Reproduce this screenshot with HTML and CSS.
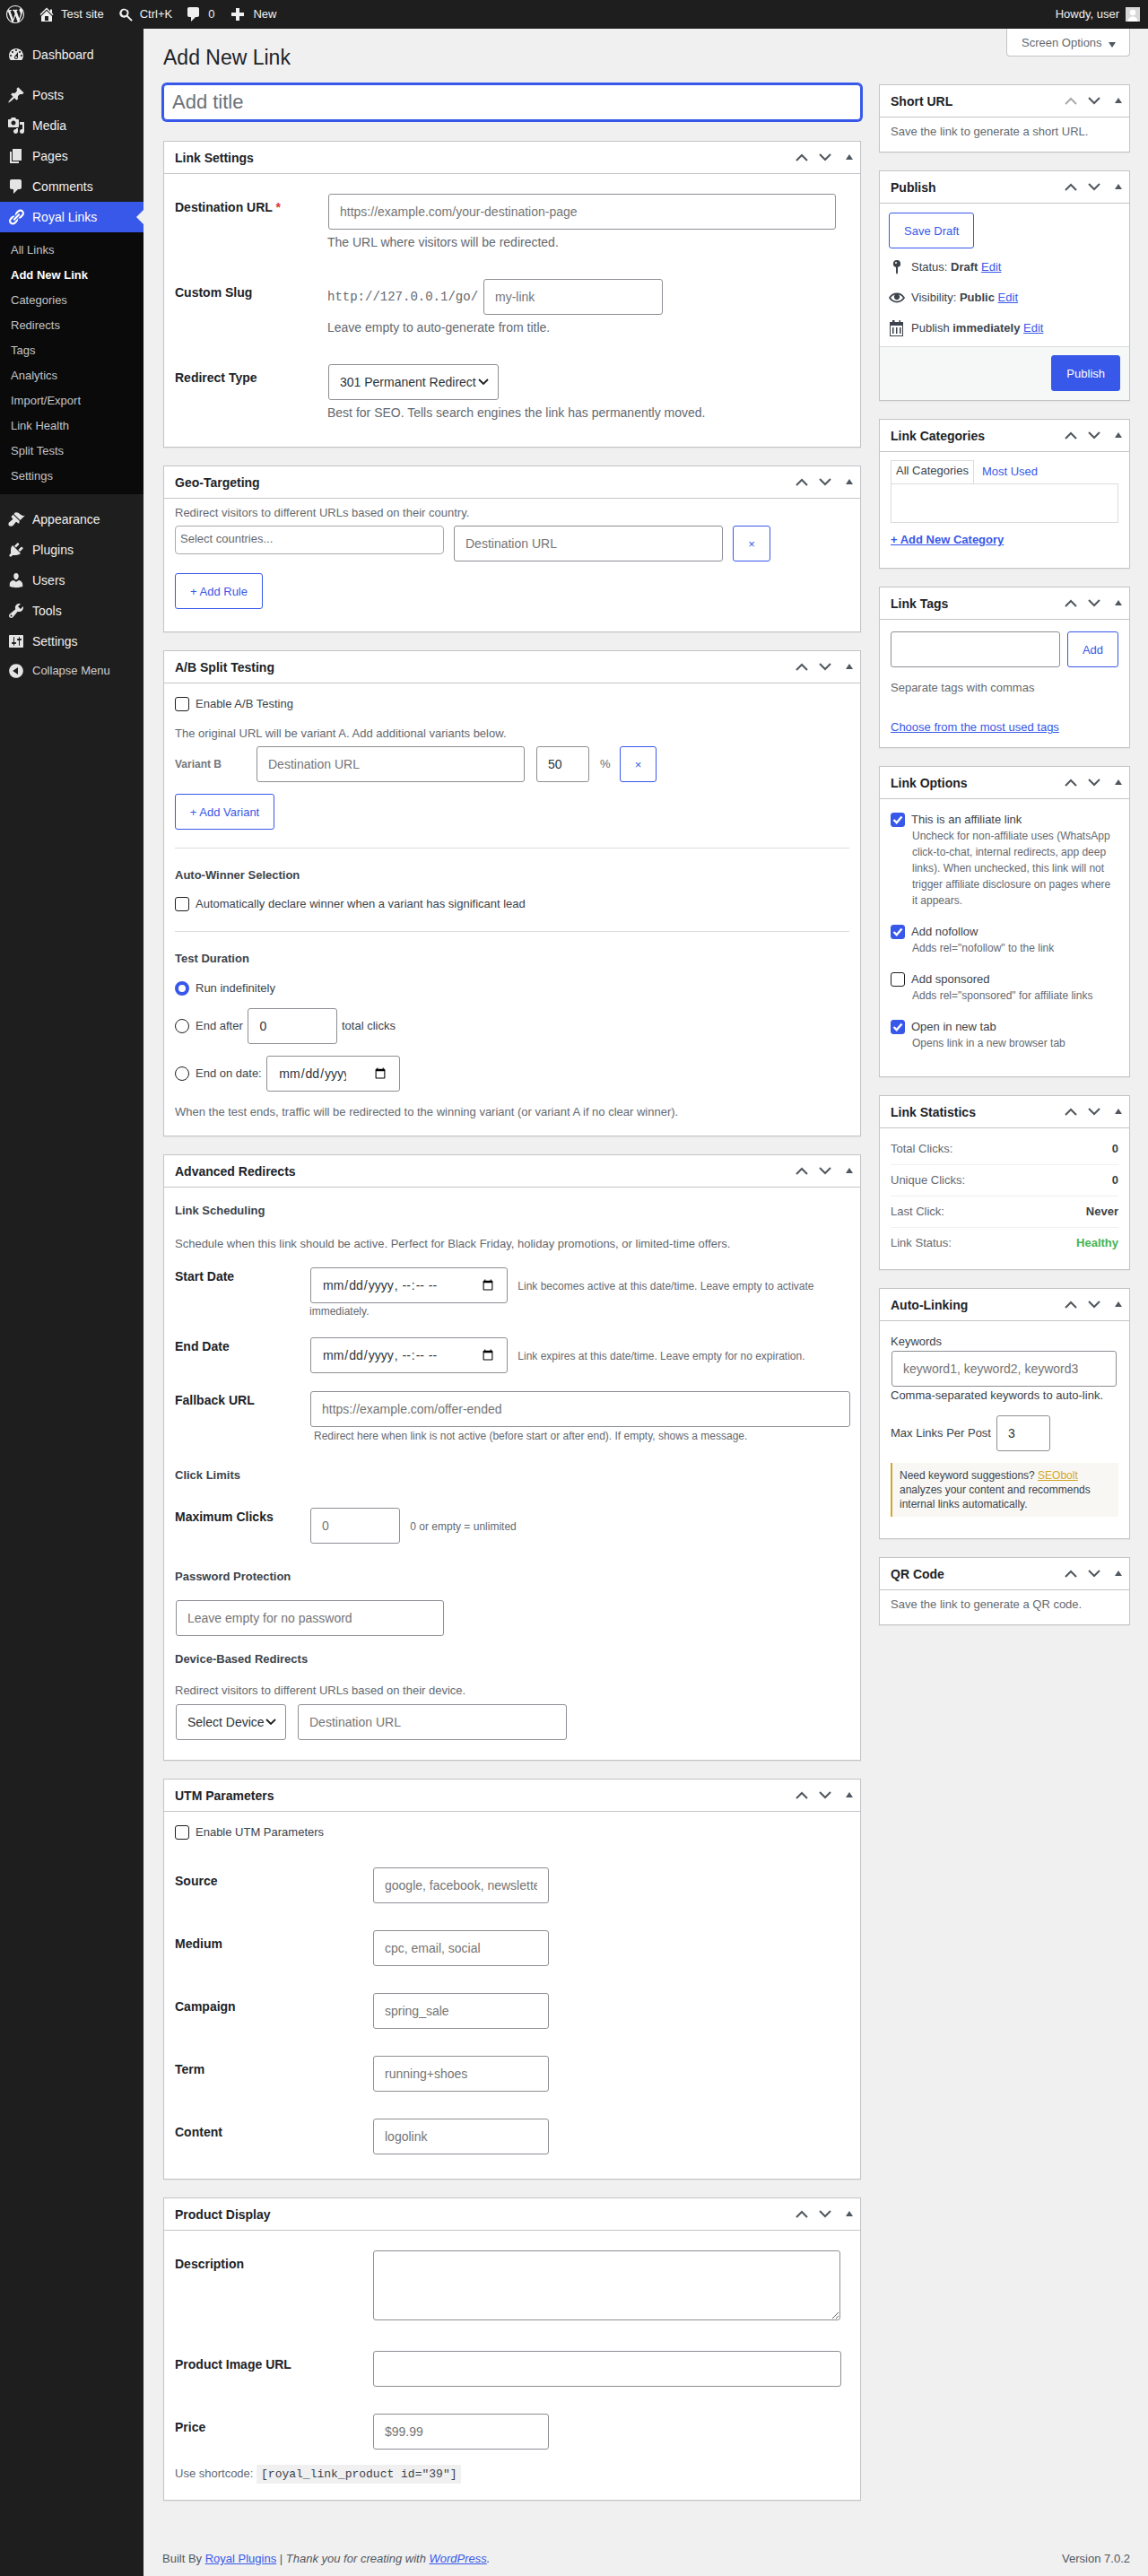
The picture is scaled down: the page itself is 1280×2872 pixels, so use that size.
FILE: index.html
```html
<!DOCTYPE html>
<html lang="en">
<head>
    <meta charset="UTF-8">
    <meta name="viewport" content="width=device-width, initial-scale=1.0">
    <title>Add New Link</title>
    <link rel="stylesheet" href="styles.css">
</head>
<body>
    <svg class="sprite" width="0" height="0" aria-hidden="true">
        <symbol id="i-wp" viewBox="0 0 20 20"><path d="M20 10c0-5.51-4.49-10-10-10C4.48 0 0 4.49 0 10c0 5.52 4.48 10 10 10 5.51 0 10-4.48 10-10zM7.78 15.37L4.37 6.22c.55-.02 1.17-.08 1.17-.08.5-.06.44-1.13-.06-1.11 0 0-1.45.11-2.37.11-.18 0-.37 0-.58-.01C4.12 2.69 6.87 1.11 10 1.11c2.33 0 4.45.87 6.05 2.34-.68-.11-1.65.39-1.65 1.58 0 .74.45 1.36.9 2.1.35.61.55 1.36.55 2.46 0 1.49-1.4 5-1.4 5l-3.03-8.37c.54-.02.82-.17.82-.17.5-.05.44-1.25-.06-1.22 0 0-1.44.12-2.38.12-.87 0-2.33-.12-2.33-.12-.5-.03-.56 1.2-.06 1.22l.92.08 1.26 3.41zM17.41 10c.24-.64.74-1.87.43-4.25.7 1.29 1.05 2.71 1.05 4.25 0 3.29-1.73 6.24-4.4 7.78.97-2.59 1.94-5.2 2.92-7.78zM6.1 18.09C3.12 16.65 1.11 13.53 1.11 10c0-1.3.23-2.48.72-3.59C3.25 10.3 4.67 14.2 6.1 18.09zm4.03-6.63l2.58 6.98c-.86.29-1.76.45-2.71.45-.79 0-1.57-.11-2.29-.33.81-2.38 1.62-4.74 2.42-7.1z"/></symbol>
        <symbol id="i-home" viewBox="0 0 20 20"><path d="M16 8.5l1.53 1.53-1.06 1.06L10 4.62l-6.47 6.47-1.06-1.06L10 2.5l4 4v-2h2v4zm-6-2.46l6 5.99V18H4v-5.97zM12 17v-5H8v5h4z"/></symbol>
        <symbol id="i-search" viewBox="0 0 20 20"><path d="M12.14 4.78c1.78 1.78 1.93 4.55.45 6.5l5.16 5.15-1.41 1.41-5.15-5.15c-1.96 1.48-4.73 1.33-6.51-.45-1.95-1.95-1.95-5.12 0-7.07 1.95-1.96 5.12-1.96 7.07 0zM10.73 10.44c1.17-1.17 1.17-3.07 0-4.24-1.17-1.18-3.07-1.18-4.24 0-1.18 1.17-1.18 3.07 0 4.24 1.17 1.18 3.07 1.18 4.24 0z"/></symbol>
        <symbol id="i-comment" viewBox="0 0 20 20"><path d="M5 2h9c1.1 0 2 .9 2 2v7c0 1.1-.9 2-2 2h-2l-5 5v-5H5c-1.1 0-2-.9-2-2V4c0-1.1.9-2 2-2z"/></symbol>
        <symbol id="i-plus" viewBox="0 0 20 20"><path d="M17 8v4h-5v5H8v-5H3V8h5V3h4v5h5z"/></symbol>
        <symbol id="i-dash" viewBox="0 0 20 20"><path d="M3.76 16h12.48c1.1-1.37 1.76-3.11 1.76-5 0-4.42-3.58-8-8-8s-8 3.58-8 8c0 1.89.66 3.63 1.76 5zM10 4c.55 0 1 .45 1 1s-.45 1-1 1-1-.45-1-1 .45-1 1-1zM6 6c.55 0 1 .45 1 1s-.45 1-1 1-1-.45-1-1 .45-1 1-1zm8 0c.55 0 1 .45 1 1s-.45 1-1 1-1-.45-1-1 .45-1 1-1zm-5.37 5.55L12 7v6c0 1.1-.9 2-2 2s-2-.9-2-2c0-.57.24-1.08.63-1.45zM4 10c.55 0 1 .45 1 1s-.45 1-1 1-1-.45-1-1 .45-1 1-1zm12 0c.55 0 1 .45 1 1s-.45 1-1 1-1-.45-1-1 .45-1 1-1zm-5 3c0-.55-.45-1-1-1s-1 .45-1 1 .45 1 1 1 1-.45 1-1z" fill-rule="evenodd"/></symbol>
        <symbol id="i-post" viewBox="0 0 20 20"><path d="M10.44 3.02l1.82-1.82 6.36 6.35-1.83 1.82c-1.05-.68-2.48-.57-3.41.36l-.75.75c-.92.93-1.04 2.35-.35 3.41l-1.83 1.82-2.41-2.41-2.8 2.79c-.42.42-3.38 2.71-3.8 2.29s1.86-3.39 2.28-3.81l2.79-2.79L4.1 9.36l1.83-1.82c1.05.69 2.48.57 3.4-.36l.75-.75c.93-.92 1.05-2.35.36-3.41z"/></symbol>
        <symbol id="i-media" viewBox="0 0 20 20"><path d="M13 11V4c0-.55-.45-1-1-1h-1.67L9 1H5L3.67 3H2c-.55 0-1 .45-1 1v7c0 .55.45 1 1 1h10c.55 0 1-.45 1-1zM7 4.5c1.38 0 2.5 1.12 2.5 2.5S8.38 9.5 7 9.5 4.5 8.38 4.5 7 5.62 4.5 7 4.5zM14 6h5v10.5c0 1.38-1.12 2.5-2.5 2.5S14 17.88 14 16.5s1.12-2.5 2.5-2.5c.17 0 .34.02.5.05V9h-3V6zm-4 8.05V13h2v3.5c0 1.38-1.12 2.5-2.5 2.5S7 17.88 7 16.5 8.12 14 9.5 14c.17 0 .34.02.5.05z" fill-rule="evenodd"/></symbol>
        <symbol id="i-page" viewBox="0 0 20 20"><path d="M6 15V2h10v13H6zm-1 1h8v2H3V5h2v11z"/></symbol>
        <symbol id="i-link" viewBox="0 0 20 20"><path d="M17.74 2.76c1.68 1.69 1.68 4.41 0 6.1l-1.53 1.52c-1.12 1.12-2.7 1.47-4.14 1.09l2.62-2.61.76-.77.76-.76c.84-.84.84-2.2 0-3.04-.84-.85-2.2-.85-3.04 0l-.77.76-3.38 3.38c-.37-1.44-.02-3.02 1.1-4.14l1.52-1.53c1.69-1.68 4.42-1.68 6.1 0zM8.59 13.43l5.34-5.34c.42-.42.42-1.1 0-1.52-.44-.43-1.13-.39-1.53 0l-5.33 5.34c-.42.42-.42 1.1 0 1.52.44.43 1.13.39 1.52 0zm-.76 2.29l4.14-4.15c.38 1.44.03 3.02-1.09 4.14l-1.52 1.53c-1.69 1.68-4.41 1.68-6.1 0-1.68-1.68-1.68-4.42 0-6.1l1.53-1.52c1.12-1.12 2.7-1.47 4.14-1.1l-4.14 4.15c-.85.84-.85 2.2 0 3.05.84.84 2.2.84 3.04 0z"/></symbol>
        <symbol id="i-brush" viewBox="0 0 20 20"><path d="M14.48 11.06L7.41 3.99l1.5-1.5c.5-.56 2.3-.47 3.51.32 1.21.8 1.43 1.28 2.91 2.1 1.18.64 2.45 1.26 4.45.85zm-.71.71L6.7 4.7 4.93 6.47c-.39.39-.39 1.02 0 1.41l1.06 1.06c.39.39.39 1.03 0 1.42-.6.6-1.43 1.11-2.21 1.69-.35.26-.7.53-1.01.84C1.43 13.23.91 15.8 2 17s3.64.83 4.98-.55c.3-.3.57-.65.83-.99.57-.78 1.08-1.61 1.67-2.21.39-.39 1.03-.39 1.42 0l1.06 1.06c.39.39 1.02.39 1.41 0z"/></symbol>
        <symbol id="i-plug" viewBox="0 0 20 20"><path d="M13.11 4.36L9.87 7.6 8 5.73l3.24-3.24c.35-.34 1.05-.2 1.56.32.52.51.66 1.21.31 1.55zm-8 1.77l.91-1.12 9.01 9.01-1.19.84c-.71.71-2.63 1.16-3.82 1.16H6.14L4.9 17.26c-.59.59-1.54.59-2.12 0-.59-.58-.59-1.53 0-2.12l1.24-1.24v-3.88c0-1.13.4-3.19 1.09-3.89zm7.26 3.97l3.24-3.24c.34-.35 1.04-.21 1.55.31.52.51.66 1.21.31 1.55l-3.24 3.25z"/></symbol>
        <symbol id="i-user" viewBox="0 0 20 20"><path d="M10 9.25c-2.27 0-2.73-3.44-2.73-3.44C7 4.02 7.82 2 9.97 2c2.16 0 2.98 2.02 2.71 3.81 0 0-.41 3.44-2.68 3.44zm0 2.57L12.72 10c2.39 0 4.52 2.33 4.52 4.53v2.49s-3.65 1.13-7.24 1.13c-3.65 0-7.24-1.13-7.24-1.13v-2.49c0-2.25 1.94-4.48 4.47-4.48z"/></symbol>
        <symbol id="i-tool" viewBox="0 0 20 20"><path d="M16.68 9.77c-1.34 1.34-3.3 1.67-4.95.99l-5.41 6.52c-.99.99-2.59.99-3.58 0s-.99-2.59 0-3.57l6.52-5.42c-.68-1.65-.35-3.61.99-4.95 1.28-1.28 3.12-1.62 4.72-1.06l-2.89 2.89 2.82 2.82 2.86-2.87c.53 1.58.18 3.39-1.08 4.65zM3.81 16.21c.4.39 1.04.39 1.43 0 .4-.4.4-1.04 0-1.43-.39-.4-1.03-.4-1.43 0-.39.39-.39 1.03 0 1.43z"/></symbol>
        <symbol id="i-set" viewBox="0 0 20 20"><path d="M18 16V4c0-.55-.45-1-1-1H3c-.55 0-1 .45-1 1v12c0 .55.45 1 1 1h14c.55 0 1-.45 1-1zM8 11h1c.55 0 1 .45 1 1s-.45 1-1 1H8v1.5c0 .28-.22.5-.5.5s-.5-.22-.5-.5V13H6c-.55 0-1-.45-1-1s.45-1 1-1h1V5.5c0-.28.22-.5.5-.5s.5.22.5.5V11zm5-2h-1c-.55 0-1-.45-1-1s.45-1 1-1h1V5.5c0-.28.22-.5.5-.5s.5.22.5.5V7h1c.55 0 1 .45 1 1s-.45 1-1 1h-1v5.5c0 .28-.22.5-.5.5s-.5-.22-.5-.5V9z"/></symbol>
        <symbol id="i-collapse" viewBox="0 0 20 20"><path d="M10 2.16c4.33 0 7.84 3.51 7.84 7.84s-3.51 7.84-7.84 7.84S2.16 14.33 2.16 10 5.71 2.16 10 2.16zm2 11.72V6.12L6.18 9.97z"/></symbol>
        <symbol id="i-up" viewBox="0 0 14 9"><path d="M1 8l6-6 6 6" fill="none" stroke="currentColor" stroke-width="2"/></symbol>
        <symbol id="i-down" viewBox="0 0 14 9"><path d="M1 1l6 6 6-6" fill="none" stroke="currentColor" stroke-width="2"/></symbol>
        <symbol id="i-tri" viewBox="0 0 8 6"><path d="M4 0l4 6H0z"/></symbol>
        <symbol id="i-pin" viewBox="0 0 18 18"><path d="M9 1a4 4 0 0 1 1 7.900V15l-1 2-1-2V8.900A4 4 0 0 1 9 1zm-1 2a1 1 0 1 0 0 2 1 1 0 0 0 0-2z" fill-rule="evenodd"/></symbol>
        <symbol id="i-eye" viewBox="0 0 20 20"><path d="M19.7 9.4C17.7 6 14 3.9 10 3.9S2.3 6 .3 9.4L0 10l.3.6c2 3.4 5.7 5.5 9.7 5.5s7.7-2.1 9.7-5.5l.3-.6-.3-.6zM10 14.1c-3.1 0-6-1.6-7.7-4.1C3.6 8 5.7 6.6 8 6.1c-.9.6-1.500 1.700-1.500 2.900 0 1.900 1.600 3.500 3.500 3.500s3.500-1.600 3.500-3.500c0-1.200-.6-2.200-1.500-2.900 2.300.5 4.400 1.900 5.700 3.900-1.700 2.500-4.600 4.100-7.700 4.100z"/></symbol>
        <symbol id="i-cal" viewBox="0 0 18 18"><path d="M5 0h1.500v2h5V0H13v2h3v16H1V2h3V0zm-3 6v11h13V6H2zm2 2h1.500v7H4V8zm4 0h1.500v7H8V8zm4 0h1.500v7H12V8z" fill-rule="evenodd"/></symbol>
    </svg>

    <header class="adminbar">
        <svg class="bar-logo"><use href="#i-wp"/></svg>
        <a class="bar-item bar-home"><svg><use href="#i-home"/></svg>Test site</a>
        <a class="bar-item bar-search"><svg><use href="#i-search"/></svg>Ctrl+K</a>
        <a class="bar-item bar-comments"><svg><use href="#i-comment"/></svg>0</a>
        <a class="bar-item bar-new"><svg><use href="#i-plus"/></svg>New</a>
        <span class="bar-howdy">Howdy, user</span>
        <svg class="bar-avatar" viewBox="0 0 16 16"><rect width="16" height="16" fill="#d8d8d8"/><circle cx="8" cy="6" r="3.2" fill="#fff"/><path d="M2.5 16c.5-4 2.800-5.500 5.500-5.500s5 1.500 5.500 5.500z" fill="#fff"/></svg>
    </header>

    <div class="layout">
        <nav class="sidebar">
            <a class="menu-item menu-first"><svg><use href="#i-dash"/></svg>Dashboard</a>
            <a class="menu-item menu-sep"><svg><use href="#i-post"/></svg>Posts</a>
            <a class="menu-item"><svg><use href="#i-media"/></svg>Media</a>
            <a class="menu-item"><svg><use href="#i-page"/></svg>Pages</a>
            <a class="menu-item"><svg><use href="#i-comment"/></svg>Comments</a>
            <a class="menu-item menu-active"><svg><use href="#i-link"/></svg>Royal Links</a>
            <div class="submenu">
                <a>All Links</a>
                <a class="sub-current">Add New Link</a>
                <a>Categories</a>
                <a>Redirects</a>
                <a>Tags</a>
                <a>Analytics</a>
                <a>Import/Export</a>
                <a>Link Health</a>
                <a>Split Tests</a>
                <a>Settings</a>
            </div>
            <a class="menu-item menu-sep"><svg><use href="#i-brush"/></svg>Appearance</a>
            <a class="menu-item"><svg><use href="#i-plug"/></svg>Plugins</a>
            <a class="menu-item"><svg><use href="#i-user"/></svg>Users</a>
            <a class="menu-item"><svg><use href="#i-tool"/></svg>Tools</a>
            <a class="menu-item"><svg><use href="#i-set"/></svg>Settings</a>
            <a class="menu-item menu-collapse"><svg><use href="#i-collapse"/></svg>Collapse Menu</a>
        </nav>

        <div class="content">
            <button class="screen-options" type="button">Screen Options<span class="screen-arrow"></span></button>
            <h1>Add New Link</h1>

            <div class="columns">
                <main class="col-main">
                    <input class="title-input" type="text" placeholder="Add title">

                    <section class="postbox">
                        <div class="box-head"><h2>Link Settings</h2><div class="handles"><svg class="h-arrow"><use href="#i-up"/></svg><svg class="h-arrow"><use href="#i-down"/></svg><svg class="h-tri"><use href="#i-tri"/></svg></div></div>
                        <div class="settings-body">
                            <div class="settings-row">
                                <label class="field-label field-label-low">Destination URL <span class="req">*</span></label>
                                <div>
                                    <input class="field w-566" type="url" placeholder="https://example.com/your-destination-page">
                                    <p class="desc">The URL where visitors will be redirected.</p>
                                </div>
                            </div>
                            <div class="settings-row">
                                <label class="field-label field-label-low">Custom Slug</label>
                                <div>
                                    <div class="slug-line"><code class="slug-prefix">http://127.0.0.1/go/</code><input class="field w-200" type="text" placeholder="my-link"></div>
                                    <p class="desc">Leave empty to auto-generate from title.</p>
                                </div>
                            </div>
                            <div class="settings-row">
                                <label class="field-label field-label-low">Redirect Type</label>
                                <div>
                                    <select class="field select w-190"><option>301 Permanent Redirect</option></select>
                                    <p class="desc">Best for SEO. Tells search engines the link has permanently moved.</p>
                                </div>
                            </div>
                        </div>
                    </section>

                    <section class="postbox">
                        <div class="box-head"><h2>Geo-Targeting</h2><div class="handles"><svg class="h-arrow"><use href="#i-up"/></svg><svg class="h-arrow"><use href="#i-down"/></svg><svg class="h-tri"><use href="#i-tri"/></svg></div></div>
                        <div class="geo-body">
                            <p class="note geo-note">Redirect visitors to different URLs based on their country.</p>
                            <div class="geo-row">
                                <div class="country-select">Select countries...</div>
                                <input class="field w-300" type="text" placeholder="Destination URL">
                                <button class="btn btn-x geo-x" type="button">×</button>
                            </div>
                            <button class="btn geo-add" type="button">+ Add Rule</button>
                        </div>
                    </section>

                    <section class="postbox">
                        <div class="box-head"><h2>A/B Split Testing</h2><div class="handles"><svg class="h-arrow"><use href="#i-up"/></svg><svg class="h-arrow"><use href="#i-down"/></svg><svg class="h-tri"><use href="#i-tri"/></svg></div></div>
                        <div class="ab-body">
                            <label class="check-line"><input type="checkbox">Enable A/B Testing</label>
                            <p class="note ab-note">The original URL will be variant A. Add additional variants below.</p>
                            <div class="variant-row">
                                <span class="variant-label">Variant B</span>
                                <input class="field w-299" type="text" placeholder="Destination URL">
                                <input class="field w-59" type="number" value="50">
                                <span class="variant-pct">%</span>
                                <button class="btn btn-x" type="button">×</button>
                            </div>
                            <button class="btn ab-add" type="button">+ Add Variant</button>
                            <hr class="rule">
                            <h4 class="sub-head ab-head">Auto-Winner Selection</h4>
                            <label class="check-line ab-auto"><input type="checkbox">Automatically declare winner when a variant has significant lead</label>
                            <hr class="rule ab-rule2">
                            <h4 class="sub-head ab-head">Test Duration</h4>
                            <label class="check-line ab-run"><input type="radio" name="dur" checked>Run indefinitely</label>
                            <label class="check-line ab-after"><input type="radio" name="dur">End after <input class="field w-100" type="number" value="0"> total clicks</label>
                            <label class="check-line ab-date"><input type="radio" name="dur">End on date: <input class="field date-clip" type="date"></label>
                            <p class="note ab-foot">When the test ends, traffic will be redirected to the winning variant (or variant A if no clear winner).</p>
                        </div>
                    </section>

                    <section class="postbox">
                        <div class="box-head"><h2>Advanced Redirects</h2><div class="handles"><svg class="h-arrow"><use href="#i-up"/></svg><svg class="h-arrow"><use href="#i-down"/></svg><svg class="h-tri"><use href="#i-tri"/></svg></div></div>
                        <div class="adv-body">
                            <h4 class="sub-head adv-first">Link Scheduling</h4>
                            <p class="note adv-note">Schedule when this link should be active. Perfect for Black Friday, holiday promotions, or limited-time offers.</p>
                            <div class="adv-row adv-start">
                                <label class="field-label">Start Date</label>
                                <div><input class="field w-220" type="datetime-local"> <span class="hint">Link becomes active at this date/time. Leave empty to activate immediately.</span></div>
                            </div>
                            <div class="adv-row adv-end">
                                <label class="field-label">End Date</label>
                                <div><input class="field w-220" type="datetime-local"> <span class="hint">Link expires at this date/time. Leave empty for no expiration.</span></div>
                            </div>
                            <div class="adv-row adv-fall">
                                <label class="field-label">Fallback URL</label>
                                <div>
                                    <input class="field fall-input" type="url" placeholder="https://example.com/offer-ended">
                                    <span class="hint hint-block">Redirect here when link is not active (before start or after end). If empty, shows a message.</span>
                                </div>
                            </div>
                            <h4 class="sub-head adv-clicks">Click Limits</h4>
                            <div class="adv-row adv-max">
                                <label class="field-label">Maximum Clicks</label>
                                <div><input class="field w-100" type="number" placeholder="0"> <span class="hint">0 or empty = unlimited</span></div>
                            </div>
                            <h4 class="sub-head adv-pass-head">Password Protection</h4>
                            <input class="field w-299 adv-pass" type="text" placeholder="Leave empty for no password">
                            <h4 class="sub-head adv-dev-head">Device-Based Redirects</h4>
                            <p class="note adv-dev-note">Redirect visitors to different URLs based on their device.</p>
                            <div class="device-row">
                                <select class="field select w-123"><option>Select Device</option></select>
                                <input class="field w-300" type="text" placeholder="Destination URL">
                            </div>
                        </div>
                    </section>

                    <section class="postbox">
                        <div class="box-head"><h2>UTM Parameters</h2><div class="handles"><svg class="h-arrow"><use href="#i-up"/></svg><svg class="h-arrow"><use href="#i-down"/></svg><svg class="h-tri"><use href="#i-tri"/></svg></div></div>
                        <div class="utm-body">
                            <label class="check-line"><input type="checkbox">Enable UTM Parameters</label>
                            <div class="utm-grid">
                                <label class="field-label field-label-low">Source</label><input class="field w-196" type="text" placeholder="google, facebook, newsletter">
                                <label class="field-label field-label-low">Medium</label><input class="field w-196" type="text" placeholder="cpc, email, social">
                                <label class="field-label field-label-low">Campaign</label><input class="field w-196" type="text" placeholder="spring_sale">
                                <label class="field-label field-label-low">Term</label><input class="field w-196" type="text" placeholder="running+shoes">
                                <label class="field-label field-label-low">Content</label><input class="field w-196" type="text" placeholder="logolink">
                            </div>
                        </div>
                    </section>

                    <section class="postbox">
                        <div class="box-head"><h2>Product Display</h2><div class="handles"><svg class="h-arrow"><use href="#i-up"/></svg><svg class="h-arrow"><use href="#i-down"/></svg><svg class="h-tri"><use href="#i-tri"/></svg></div></div>
                        <div class="product-body">
                            <div class="product-row product-row-area">
                                <label class="field-label field-label-low">Description</label>
                                <textarea class="field product-area"></textarea>
                            </div>
                            <div class="product-row">
                                <label class="field-label field-label-low">Product Image URL</label>
                                <input class="field w-522" type="url">
                            </div>
                            <div class="product-row">
                                <label class="field-label field-label-low">Price</label>
                                <input class="field w-196" type="text" placeholder="$99.99">
                            </div>
                            <p class="note shortcode">Use shortcode: <code>[royal_link_product id="39"]</code></p>
                        </div>
                    </section>
                </main>

                <aside class="col-side">
                    <section class="postbox">
                        <div class="box-head"><h2>Short URL</h2><div class="handles"><svg class="h-arrow h-off"><use href="#i-up"/></svg><svg class="h-arrow"><use href="#i-down"/></svg><svg class="h-tri"><use href="#i-tri"/></svg></div></div>
                        <div class="side-text"><p class="note">Save the link to generate a short URL.</p></div>
                    </section>

                    <section class="postbox">
                        <div class="box-head"><h2>Publish</h2><div class="handles"><svg class="h-arrow"><use href="#i-up"/></svg><svg class="h-arrow"><use href="#i-down"/></svg><svg class="h-tri"><use href="#i-tri"/></svg></div></div>
                        <div class="publish-main">
                            <button class="btn" type="button">Save Draft</button>
                            <div class="pub-rows">
                                <div class="pub-row"><svg><use href="#i-pin"/></svg><span>Status: <b>Draft</b> <a href="#">Edit</a></span></div>
                                <div class="pub-row"><svg><use href="#i-eye"/></svg><span>Visibility: <b>Public</b> <a href="#">Edit</a></span></div>
                                <div class="pub-row"><svg><use href="#i-cal"/></svg><span>Publish <b>immediately</b> <a href="#">Edit</a></span></div>
                            </div>
                        </div>
                        <div class="publish-foot"><button class="btn btn-primary" type="button">Publish</button></div>
                    </section>

                    <section class="postbox">
                        <div class="box-head"><h2>Link Categories</h2><div class="handles"><svg class="h-arrow"><use href="#i-up"/></svg><svg class="h-arrow"><use href="#i-down"/></svg><svg class="h-tri"><use href="#i-tri"/></svg></div></div>
                        <div class="cat-body">
                            <div class="cat-tabs"><span class="cat-tab">All Categories</span><a class="cat-other">Most Used</a></div>
                            <div class="cat-panel"></div>
                            <a class="cat-add" href="#">+ Add New Category</a>
                        </div>
                    </section>

                    <section class="postbox">
                        <div class="box-head"><h2>Link Tags</h2><div class="handles"><svg class="h-arrow"><use href="#i-up"/></svg><svg class="h-arrow"><use href="#i-down"/></svg><svg class="h-tri"><use href="#i-tri"/></svg></div></div>
                        <div class="tags-body">
                            <div class="tags-row"><input class="field tags-input" type="text"><button class="btn tags-add" type="button">Add</button></div>
                            <p class="note tags-note">Separate tags with commas</p>
                            <a class="tags-link" href="#">Choose from the most used tags</a>
                        </div>
                    </section>

                    <section class="postbox">
                        <div class="box-head"><h2>Link Options</h2><div class="handles"><svg class="h-arrow"><use href="#i-up"/></svg><svg class="h-arrow"><use href="#i-down"/></svg><svg class="h-tri"><use href="#i-tri"/></svg></div></div>
                        <div class="options-body">
                            <div class="option">
                                <label class="check-line"><input type="checkbox" checked>This is an affiliate link</label>
                                <p class="option-desc">Uncheck for non-affiliate uses (WhatsApp click-to-chat, internal redirects, app deep links). When unchecked, this link will not trigger affiliate disclosure on pages where it appears.</p>
                            </div>
                            <div class="option">
                                <label class="check-line"><input type="checkbox" checked>Add nofollow</label>
                                <p class="option-desc">Adds rel="nofollow" to the link</p>
                            </div>
                            <div class="option">
                                <label class="check-line"><input type="checkbox">Add sponsored</label>
                                <p class="option-desc">Adds rel="sponsored" for affiliate links</p>
                            </div>
                            <div class="option">
                                <label class="check-line"><input type="checkbox" checked>Open in new tab</label>
                                <p class="option-desc">Opens link in a new browser tab</p>
                            </div>
                        </div>
                    </section>

                    <section class="postbox">
                        <div class="box-head"><h2>Link Statistics</h2><div class="handles"><svg class="h-arrow"><use href="#i-up"/></svg><svg class="h-arrow"><use href="#i-down"/></svg><svg class="h-tri"><use href="#i-tri"/></svg></div></div>
                        <div class="stats-body">
                            <div class="stat"><span>Total Clicks:</span><b>0</b></div>
                            <div class="stat"><span>Unique Clicks:</span><b>0</b></div>
                            <div class="stat"><span>Last Click:</span><b>Never</b></div>
                            <div class="stat"><span>Link Status:</span><b class="stat-ok">Healthy</b></div>
                        </div>
                    </section>

                    <section class="postbox">
                        <div class="box-head"><h2>Auto-Linking</h2><div class="handles"><svg class="h-arrow"><use href="#i-up"/></svg><svg class="h-arrow"><use href="#i-down"/></svg><svg class="h-tri"><use href="#i-tri"/></svg></div></div>
                        <div class="auto-body">
                            <label class="auto-label">Keywords</label>
                            <input class="field auto-keywords" type="text" placeholder="keyword1, keyword2, keyword3">
                            <p class="auto-help">Comma-separated keywords to auto-link.</p>
                            <div class="auto-max"><label>Max Links Per Post</label><input class="field w-60" type="number" value="3"></div>
                            <p class="auto-tip">Need keyword suggestions? <a href="#">SEObolt</a> analyzes your content and recommends internal links automatically.</p>
                        </div>
                    </section>

                    <section class="postbox">
                        <div class="box-head"><h2>QR Code</h2><div class="handles"><svg class="h-arrow"><use href="#i-up"/></svg><svg class="h-arrow"><use href="#i-down"/></svg><svg class="h-tri"><use href="#i-tri"/></svg></div></div>
                        <div class="side-text"><p class="note">Save the link to generate a QR code.</p></div>
                    </section>
                </aside>
            </div>

            <footer class="page-foot">
                <span>Built By <a href="#">Royal Plugins</a> | <i>Thank you for creating with <a href="#">WordPress</a>.</i></span>
                <span>Version 7.0.2</span>
            </footer>
        </div>
    </div>
</body>
</html>
```

FILE: styles.css
```css
/* Base */
* {
    box-sizing: border-box;
}

body {
    margin: 0;
    background-color: #f0f0f0;
    color: #3c434a;
    font-family: "Liberation Sans", Arial, sans-serif;
    font-size: 13px;
    line-height: 18px;
}

a {
    color: #3858e9;
}

p,
h1,
h2,
h4 {
    margin: 0;
}

.sprite {
    position: absolute;
}

/* Admin bar */
.adminbar {
    display: flex;
    align-items: center;
    height: 32px;
    background-color: #1e1e1e;
    color: #f0f0f0;
}

.adminbar svg {
    fill: #f0f0f0;
    width: 20px;
    height: 20px;
}

.bar-logo {
    margin-left: 7px;
}

.bar-item {
    display: flex;
    align-items: center;
    color: inherit;
}

.bar-home {
    margin-left: 15px;
    gap: 6px;
}

.bar-search {
    margin-left: 14px;
    gap: 6px;
}

.bar-comments {
    margin-left: 14px;
    gap: 6px;
}

.bar-new {
    margin-left: 16px;
    gap: 7px;
}

.bar-howdy {
    margin-left: auto;
    margin-right: 7px;
}

.adminbar .bar-avatar {
    width: 16px;
    height: 16px;
    margin-right: 9px;
}

/* Sidebar */
.layout {
    display: flex;
    align-items: stretch;
    min-height: 2840px;
}

.sidebar {
    flex: 0 0 160px;
    background-color: #1e1e1e;
}

.menu-item {
    position: relative;
    display: flex;
    align-items: center;
    gap: 8px;
    height: 34px;
    padding-left: 8px;
    color: #f0f0f0;
    font-size: 14px;
}

.menu-item svg {
    fill: #e4e4e4;
    width: 20px;
    height: 20px;
}

.menu-first {
    margin-top: 12px;
}

.menu-sep {
    margin-top: 11px;
}

.menu-active {
    background-color: #3858e9;
    color: #fff;
}

.menu-active svg {
    fill: #fff;
}

.menu-active::after {
    content: "";
    position: absolute;
    right: 0;
    top: 9px;
    border: 8px solid transparent;
    border-right-color: #f0f0f0;
    border-left-width: 0;
}

.submenu {
    padding: 6px 0;
    background-color: #0a0a0a;
}

.submenu a {
    display: block;
    height: 28px;
    padding-left: 12px;
    color: #c3c4c7;
    font-size: 13px;
    line-height: 28px;
}

.submenu .sub-current {
    color: #fff;
    font-weight: bold;
}

.menu-collapse {
    color: #d0d0d0;
    font-size: 13px;
    height: 30px;
    margin-top: 1px;
}

/* Content */
.content {
    position: relative;
    flex: 1;
    min-width: 0;
    padding: 0 20px 0 22px;
}

.screen-options {
    position: absolute;
    top: 0;
    right: 20px;
    width: 138px;
    height: 31px;
    padding: 0 0 0 16px;
    text-align: left;
    background-color: #fff;
    border: 1px solid #c3c4c7;
    border-top: none;
    border-radius: 0 0 4px 4px;
    color: #646970;
    font-family: inherit;
    font-size: 13px;
}

.screen-arrow {
    display: inline-block;
    margin-left: 7px;
    border: 4px solid transparent;
    border-top: 6px solid #50575e;
    border-bottom: none;
    vertical-align: -1px;
}

h1 {
    padding-top: 18px;
    color: #1d2327;
    font-size: 23px;
    font-weight: 400;
    line-height: 29px;
}

.columns {
    display: flex;
    gap: 20px;
    margin-top: 15px;
}

.col-main {
    flex: 0 0 778px;
    min-width: 0;
}

.col-side {
    flex: 0 0 280px;
    min-width: 0;
}

.title-input {
    display: block;
    width: 100%;
    height: 40px;
    margin-bottom: 23px;
    padding: 0 9px;
    border: 1px solid #3858e9;
    border-radius: 4px;
    box-shadow: 0 0 0 2px #3858e9;
    outline: none;
    font-family: inherit;
    font-size: 22px;
}

.title-input::placeholder {
    color: #6d7278;
}

/* Metaboxes */
.postbox {
    margin-bottom: 20px;
    background-color: #fff;
    border: 1px solid #c3c4c7;
    box-shadow: 0 1px 1px rgba(0, 0, 0, 0.04);
}

.box-head {
    display: flex;
    align-items: center;
    justify-content: space-between;
    height: 36px;
    padding-left: 12px;
    border-bottom: 1px solid #c3c4c7;
}

.box-head h2 {
    color: #1d2327;
    font-size: 14px;
    font-weight: bold;
    line-height: 20px;
}

.handles {
    display: flex;
    align-items: center;
    gap: 12px;
    margin-right: 8px;
    color: #50575e;
}

.h-arrow {
    width: 14px;
    height: 9px;
}

.h-off {
    color: #a7aaad;
}

.h-tri {
    width: 8px;
    height: 6px;
    margin-left: 4px;
    margin-top: -2px;
    fill: #50575e;
}

/* Form fields */
.field {
    height: 40px;
    padding: 0 12px;
    background-color: #fff;
    border: 1px solid #8c8f94;
    border-radius: 3px;
    color: #2c3338;
    font-family: inherit;
    font-size: 14px;
}

.field::placeholder {
    color: #757575;
}

.select {
    appearance: none;
    padding-right: 20px;
    background-image: url("data:image/svg+xml,%3Csvg xmlns='http://www.w3.org/2000/svg' width='12' height='8'%3E%3Cpath d='M1 1l5 5 5-5' fill='none' stroke='%231e1e1e' stroke-width='1.800'/%3E%3C/svg%3E");
    background-repeat: no-repeat;
    background-position: right 10px center;
}

.w-60 { width: 60px; }
.w-59 { width: 59px; }
.w-100 { width: 100px; }
.w-123 { width: 123px; }
.w-190 { width: 190px; }
.w-196 { width: 196px; }
.w-200 { width: 200px; }
.w-220 { width: 220px; }
.w-299 { width: 299px; }
.w-300 { width: 300px; }
.w-522 { width: 522px; }
.w-566 { width: 566px; }

.date-clip {
    width: 149px;
}

.date-clip::-webkit-datetime-edit {
    max-width: 76px;
    overflow: hidden;
}

.date-clip::-webkit-calendar-picker-indicator {
    margin-left: auto;
}

input[type="checkbox"],
input[type="radio"] {
    appearance: none;
    flex: none;
    width: 16px;
    height: 16px;
    margin: 0 7px 0 0;
    background-color: #fff;
    border: 1px solid #1e1e1e;
    border-radius: 3px;
}

input[type="radio"] {
    border-radius: 50%;
}

input[type="radio"]:checked {
    border: 4px solid #3858e9;
}

input[type="checkbox"]:checked {
    border-color: #3858e9;
    background-color: #3858e9;
    background-image: url("data:image/svg+xml,%3Csvg xmlns='http://www.w3.org/2000/svg' width='14' height='14'%3E%3Cpath d='M2.500 7l3.200 3.200L11.500 3.500' fill='none' stroke='%23fff' stroke-width='2.400'/%3E%3C/svg%3E");
    background-position: center;
    background-repeat: no-repeat;
}

.check-line {
    display: flex;
    align-items: center;
    min-height: 16px;
    line-height: 16px;
    white-space: pre;
}

.check-line .field {
    margin: 0 1px 0 2px;
}

.btn {
    height: 40px;
    padding: 0 16px;
    background-color: #fff;
    border: 1px solid #3858e9;
    border-radius: 3px;
    color: #3858e9;
    font-family: inherit;
    font-size: 13px;
}

.btn-x {
    width: 41px;
    padding: 0;
}

.btn-primary {
    background-color: #3858e9;
    color: #fff;
}

.note {
    color: #646970;
}

.sub-head {
    color: #3c434a;
    font-size: 13px;
    font-weight: bold;
    line-height: 18px;
}

.rule {
    height: 1px;
    margin: 20px 0 0;
    background-color: #dcdcde;
    border: 0;
}

.field-label {
    color: #1d2327;
    font-size: 14px;
    font-weight: bold;
    line-height: 20px;
}

.field-label-low {
    padding-top: 5px;
}

.req {
    color: #d63638;
}

/* Link settings */
.settings-body {
    padding: 0 12px 19px;
}

.settings-row {
    display: grid;
    grid-template-columns: 171px 1fr;
    padding: 22px 0 10px;
}

.desc {
    margin-top: 5px;
    color: #646970;
    font-size: 14px;
    margin-left: -1px;
}

.slug-line {
    display: flex;
    align-items: center;
    gap: 6px;
    margin-left: -1px;
}

.slug-prefix {
    color: #646970;
    font-family: "Liberation Mono", monospace;
    font-size: 14px;
}

/* Geo */
.geo-body {
    padding: 7px 12px 25px;
}

.geo-row {
    display: flex;
    align-items: flex-start;
    gap: 11px;
    margin-top: 5px;
}

.country-select {
    width: 300px;
    height: 32px;
    padding: 5px 5px;
    border: 1px solid #a7aaad;
    border-radius: 4px;
    color: #646970;
}

.geo-x {
    width: 42px;
}

.geo-add {
    display: block;
    margin-top: 13px;
    width: 98px;
    padding: 0;
}

/* A/B */
.ab-body {
    padding: 15px 12px 17px;
}

.ab-note {
    margin-top: 16px;
}

.variant-row {
    display: flex;
    align-items: center;
    margin-top: 5px;
}

.variant-label {
    width: 91px;
    color: #72777c;
    font-size: 12px;
    font-weight: bold;
}

.variant-row .w-59 {
    margin-left: 13px;
}

.variant-pct {
    width: 34px;
    padding-left: 12px;
    color: #646970;
}

.ab-add {
    display: block;
    width: 111px;
    margin-top: 13px;
    padding: 0;
}

.ab-head {
    margin-top: 21px;
}

.ab-auto {
    margin-top: 15px;
}

.ab-rule2 {
    margin-top: 22px;
}

.ab-run {
    margin-top: 16px;
}

.ab-after {
    margin-top: 14px;
}

.ab-date {
    margin-top: 13px;
}

.ab-foot {
    margin-top: 14px;
}

/* Advanced redirects */
.adv-body {
    padding: 17px 12px 22px;
}

.adv-note {
    margin-top: 19px;
}

.adv-row {
    display: grid;
    grid-template-columns: 150px 1fr;
}

.adv-row > div {
    font-size: 12px;
}

.adv-row .field {
    margin: 0 8px 0 1px;
}

.adv-row .fall-input {
    display: block;
    width: 602px;
    margin: 0 0 0 1px;
}

.adv-start {
    margin-top: 17px;
}

.adv-end {
    margin-top: 20px;
}

.adv-fall {
    margin-top: 20px;
}

.hint {
    color: #646970;
    font-size: 12px;
    line-height: 17px;
}

.hint-block {
    display: block;
    margin: 2px 0 0 5px;
}

.adv-clicks {
    margin-top: 26px;
}

.adv-max {
    margin-top: 27px;
}

.adv-pass-head {
    margin-top: 28px;
}

.adv-pass {
    display: block;
    margin: 17px 0 0 1px;
}

.adv-dev-head {
    margin-top: 17px;
}

.adv-dev-note {
    margin-top: 17px;
}

.device-row {
    display: flex;
    gap: 13px;
    margin: 6px 0 0 1px;
}

/* UTM */
.utm-body {
    padding: 15px 12px 27px;
}

.utm-grid {
    display: grid;
    grid-template-columns: 221px 196px;
    row-gap: 30px;
    margin-top: 31px;
}

/* Product */
.product-body {
    padding: 22px 12px 19px;
}

.product-row {
    display: grid;
    grid-template-columns: 221px 1fr;
    margin-bottom: 30px;
}

.product-row-area {
    margin-bottom: 34px;
}

.product-area {
    display: block;
    width: 521px;
    height: 78px;
}

.shortcode {
    margin-top: -12px;
}

.shortcode code {
    padding: 3px 5px;
    background-color: #f0f0f1;
    color: #3c434a;
    font-family: "Liberation Mono", monospace;
    font-size: 13px;
}

/* Sidebar boxes */
.side-text {
    padding: 7px 12px 13px;
}

.publish-main {
    padding: 10px 10px 3px;
}

.pub-rows {
    margin-top: 4px;
}

.pub-row {
    display: flex;
    align-items: center;
    gap: 7px;
    height: 34px;
}

.pub-row svg {
    width: 18px;
    height: 18px;
    fill: #3c434a;
}

.publish-foot {
    display: flex;
    justify-content: flex-end;
    padding: 9px 10px 10px;
    background-color: #f6f7f7;
    border-top: 1px solid #dcdcde;
}

.cat-body {
    padding: 9px 12px 22px;
}

.cat-tabs {
    display: flex;
    align-items: center;
    height: 26px;
}

.cat-tab {
    height: 26px;
    padding: 1px 5px 0;
    border: 1px solid #dcdcde;
    border-bottom: none;
    color: #3c434a;
    line-height: 20px;
}

.cat-other {
    margin-left: 9px;
}

.cat-panel {
    height: 44px;
    border: 1px solid #dcdcde;
    margin-bottom: 10px;
}

.cat-add {
    font-weight: bold;
}

.tags-body {
    padding: 13px 12px;
}

.tags-row {
    display: flex;
    gap: 8px;
}

.tags-input {
    width: 189px;
}

.tags-add {
    width: 57px;
    padding: 0;
}

.tags-note {
    margin-top: 14px;
}

.tags-link {
    display: block;
    margin-top: 26px;
}

.options-body {
    padding: 15px 12px 28px;
}

.option {
    margin-bottom: 18px;
}

.option:last-child {
    margin-bottom: 0;
}

.option-desc {
    margin: 1px 0 0 24px;
    color: #646970;
    font-size: 12px;
    line-height: 18px;
}

.stats-body {
    padding: 6px 12px 12px;
}

.stat {
    display: flex;
    justify-content: space-between;
    padding: 8px 0;
    border-bottom: 1px solid #f0f0f1;
}

.stat:last-child {
    border-bottom: none;
}

.stat span {
    color: #646970;
}

.stat-ok {
    color: #46b450;
}

.auto-body {
    padding: 14px 12px 24px;
}

.auto-label {
    display: block;
}

.auto-keywords {
    display: block;
    width: 251px;
    margin: 1px 0 0 1px;
}

.auto-help {
    margin-top: 1px;
}

.auto-max {
    display: flex;
    align-items: center;
    gap: 6px;
    margin-top: 13px;
}

.auto-tip {
    margin-top: 13px;
    padding: 6px 8px;
    background-color: #f8f7f3;
    border-left: 2px solid #d4a72c;
    font-size: 12px;
    line-height: 16px;
}

.auto-tip a {
    color: #d4a72c;
}

/* Footer */
.page-foot {
    display: flex;
    justify-content: space-between;
    margin: 36px 0 0 -1px;
    color: #50575e;
}
```
